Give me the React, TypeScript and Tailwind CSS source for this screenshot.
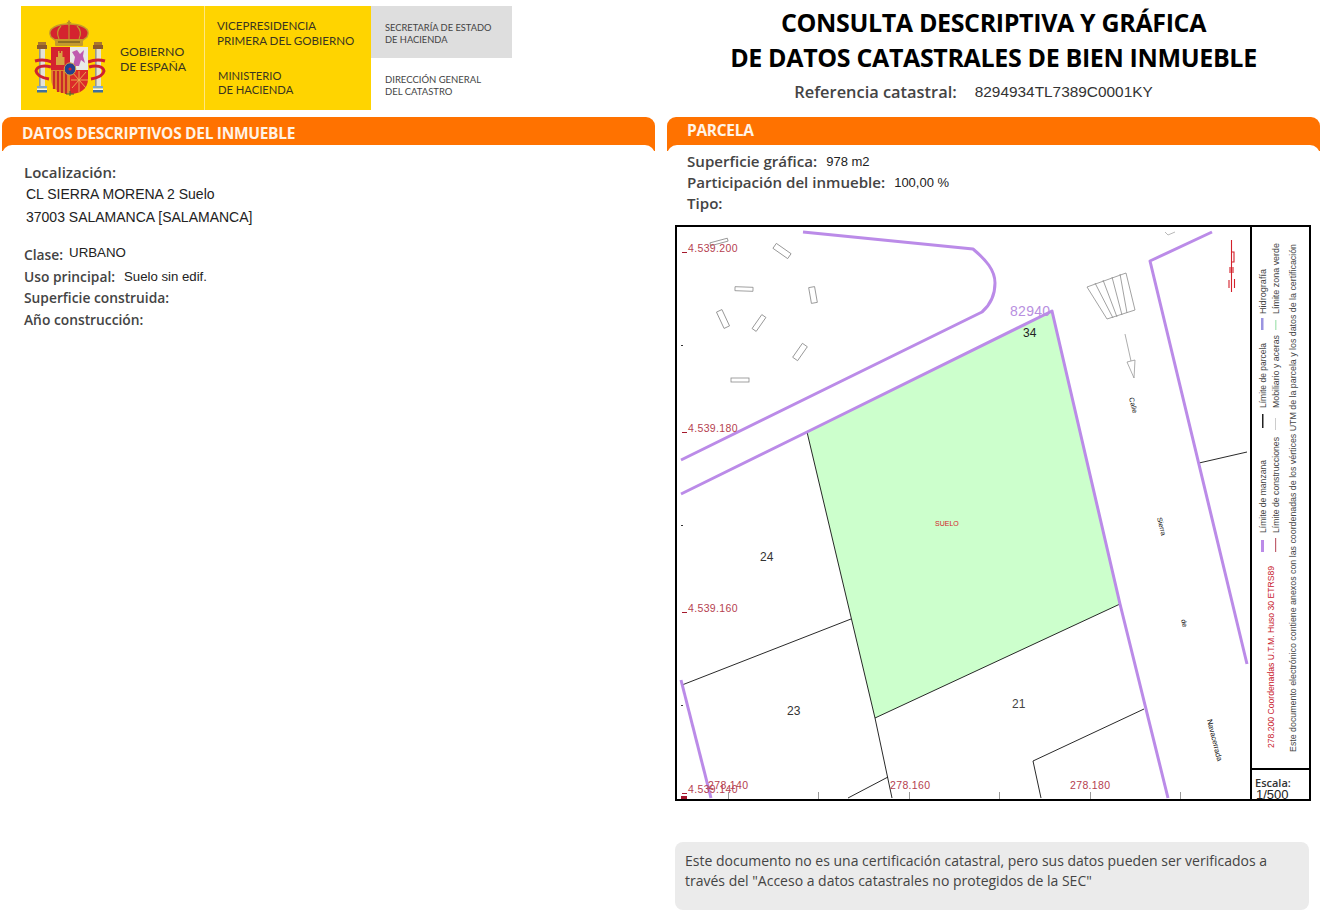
const furniture = [
  { x: 719, y: 242, w: 18, h: 3, a: -15 },
  { x: 782, y: 251, w: 18, h: 6, a: 35 },
  { x: 744, y: 289, w: 18, h: 4, a: 2 },
  { x: 813, y: 295, w: 16, h: 6, a: 80 },
  { x: 723, y: 319, w: 18, h: 6, a: 65 },
  { x: 759, y: 323, w: 17, h: 5, a: -55 },
  { x: 800, y: 352, w: 17, h: 6, a: -55 },
  { x: 740, y: 380, w: 18, h: 4, a: 0 },
];

const purpleLines = [
  'M803 232 L973 249 C986 260 995 270 995 283 C995 295 990 305 982 312 L681 460',
  'M681 494 L807 432 L1052 311 L1120 604 L1168 798',
  'M1212 232 L1150 261 L1247 664',
  'M681 680 L711 798',
];

const blackLines = [
  'M807 432 L875 718 L892 798',
  'M682 685 L851 619',
  'M875 718 L1120 604',
  'M848 798 L888 777',
  'M1041 798 L1033 761 L1144 709',
  'M1199 463 L1247 452',
];

const gridY = [
  { label: '4.539.200', y: 252 },
  { label: '4.539.180', y: 432 },
  { label: '4.539.160', y: 612 },
  { label: '4.539.140', y: 793 },
];

const gridX = [
  { label: '278.140', x: 708 },
  { label: '278.160', x: 890 },
  { label: '278.180', x: 1070 },
];

const streetNames = [
  { label: 'Calle', x: 1129, y: 398, size: 7 },
  { label: 'Sierra', x: 1157, y: 518, size: 7 },
  { label: 'de', x: 1181, y: 620, size: 7 },
  { label: 'Navacerrada', x: 1207, y: 720, size: 7.5 },
];

function CoatOfArms() {
  return (
    <svg viewBox="30 15 80 85" className="w-[80px] h-[85px] shrink-0">
      {/* pillars */}
      {[37, 93].map(x => (
        <g key={x}>
          <rect x={x + 1} y={41} width={8} height={3} fill="#a8752f" />
          <rect x={x} y={44} width={10} height={4} fill="#8d5a2b" />
          <rect x={x + 2} y={48} width={6} height={37} fill="#e3e1d6" />
          <rect x={x + 2} y={48} width={1.6} height={37} fill="#97978c" />
          <rect x={x} y={85} width={10} height={2.5} fill="#7fa8c9" />
          <rect x={x} y={87.5} width={10} height={1.5} fill="#f4f4ee" />
          <rect x={x} y={89} width={10} height={2.5} fill="#3f6f9d" />
        </g>
      ))}
      {/* ribbons */}
      <path d="M35 60 C42 58 47 59 52 61 M51 66 C44 64 37 65 36 70 C37 75 43 77 49 78" fill="none" stroke="#cf2030" strokeWidth="3" />
      <path d="M105 60 C98 58 93 59 88 61 M89 66 C96 64 103 65 104 70 C103 75 97 77 91 78" fill="none" stroke="#cf2030" strokeWidth="3" />
      {/* crown */}
      <path d="M51 36 C46 27 58 23 69 23 C80 23 92 27 87 36 L83 39 H55 Z" fill="#d4232f" stroke="#c49a2c" strokeWidth="1.4" />
      <path d="M69 24 V38 M61 25 C57 29 57 34 59 38 M77 25 C81 29 81 34 79 38" fill="none" stroke="#c49a2c" strokeWidth="1.1" />
      <rect x="55" y="38" width="28" height="7" rx="1" fill="#c49a2c" />
      <rect x="58" y="40" width="22" height="2" fill="#8f6f22" />
      <rect x="68" y="19.5" width="2" height="5" fill="#b98f2a" />
      <rect x="66.8" y="21" width="4.4" height="1.4" fill="#b98f2a" />
      {/* shield */}
      <path d="M51 46 H70 V69 H51 Z" fill="#d4232f" />
      <path d="M70 46 H88 V69 H70 Z" fill="#e9e9e6" />
      <path d="M51 69 H70 V93 C60 93 51 88 51 78 Z" fill="#e08a2c" />
      <path d="M54 70 V88 M58 70 V91 M62 70 V92 M66 70 V93" stroke="#c92a2a" strokeWidth="2.2" />
      <path d="M70 69 H88 V78 C88 88 80 93 70 93 Z" fill="#dc2a2a" />
      <path d="M72 71 L86 87 M86 71 L72 87 M79 70 V91 M71 79 H88" stroke="#e9a84c" strokeWidth="1" />
      {/* castle and lion */}
      <path d="M56 64 V56 H58 V50 H59.5 V52 H61 V50 H62.5 V56 H64.5 V64 Z" fill="#d9a441" />
      <path d="M73 65 L75 56 L72 51 L77 49 L80 53 L84 49 L83 55 L85 62 L81 59 L79 65 Z" fill="#c05aae" />
      {/* centre */}
      <ellipse cx="70" cy="68" rx="5.8" ry="6.2" fill="#25408f" stroke="#d9a441" strokeWidth="1" />
      <circle cx="70" cy="68" r="1.6" fill="#d4232f" />
      <path d="M70 90 V95 M66 93 H74" stroke="#3e6b3a" strokeWidth="1" />
    </svg>
  );
}

function Logo() {
  return (
    <div className="flex w-[491px] h-[104px] ml-[21px] mt-[6px] text-[#3a3520] font-['Lato',sans-serif] shrink-0">
      <div className="w-[183px] h-full bg-[#ffd400] flex items-center pl-[9px]">
        <CoatOfArms />
        <div className="ml-[10px] pt-[2px] text-[12.3px] leading-[15px] whitespace-nowrap">
          <div>GOBIERNO</div>
          <div>DE ESPAÑA</div>
        </div>
      </div>
      <div className="w-[167px] h-full bg-[#ffd400] border-l border-[#ffe680] pl-[12px] pt-[12px] pb-[13px] flex flex-col justify-between leading-[15px] whitespace-nowrap">
        <div className="text-[11.6px]">
          <div>VICEPRESIDENCIA</div>
          <div>PRIMERA DEL GOBIERNO</div>
        </div>
        <div className="text-[11.2px] leading-[14px] pl-[1px]">
          <div>MINISTERIO</div>
          <div>DE HACIENDA</div>
        </div>
      </div>
      <div className="w-[141px] h-full flex flex-col leading-[11.5px] whitespace-nowrap text-[#444]">
        <div className="h-[52px] bg-[#dedede] pl-[14px] pt-[16px] text-[9.3px]">
          <div>SECRETARÍA DE ESTADO</div>
          <div>DE HACIENDA</div>
        </div>
        <div className="pl-[14px] pt-[16px] text-[9.5px]">
          <div>DIRECCIÓN GENERAL</div>
          <div>DEL CATASTRO</div>
        </div>
      </div>
    </div>
  );
}

function SectionBar({ title, textClass }: { title: string; textClass: string }) {
  return (
    <div className={`h-[34px] bg-[#ff7200] rounded-t-[9px] px-[20px] font-['Open_Sans',sans-serif] font-bold text-[15.5px] tracking-[-0.3px] text-[#fff3e6] ${textClass}`}>
      {title}
    </div>
  );
}

function MapDrawing() {
  return (
    <svg viewBox="677 227 573 572" className="w-[573px] h-[572px] shrink-0 font-normal">
      <polygon points="807,432 1052,311 1120,604 875,718" fill="#ccffcc" />

      {furniture.map((f, i) => (
        <rect
          key={i}
          x={f.x - f.w / 2}
          y={f.y - f.h / 2}
          width={f.w}
          height={f.h}
          fill="none"
          stroke="#8a8a8a"
          strokeWidth="0.8"
          transform={`rotate(${f.a} ${f.x} ${f.y})`}
        />
      ))}

      {/* parking bays */}
      <path
        d="M1087 287 L1126 273 L1135 310 L1107 319 Z M1095 283 L1113 318 M1103 280 L1117 317 M1112 277 L1122 315 M1120 274 L1127 313"
        fill="none"
        stroke="#8a8a8a"
        strokeWidth="0.8"
      />

      {/* street arrow and small marks */}
      <path d="M1125 334 L1131 361 L1127 362 L1134 378 L1135 360 L1131 361" fill="none" stroke="#8a8a8a" strokeWidth="0.7" />
      <path d="M1165 232 L1168 235 L1175 232" fill="none" stroke="#999" strokeWidth="0.7" />
      <path d="M1231.5 240 V292 M1232 252 H1234 V262 H1232 M1230 267 V273 M1233 267 V273 M1229 280 V288 M1234.5 279 V288" fill="none" stroke="#d3202a" strokeWidth="1.1" />

      {blackLines.map(d => (
        <path key={d} d={d} fill="none" stroke="#111" strokeWidth="0.9" />
      ))}
      {purpleLines.map(d => (
        <path key={d} d={d} fill="none" stroke="#bb8be8" strokeWidth="3" strokeLinejoin="round" />
      ))}

      <g fontFamily="'Liberation Sans', sans-serif">
        {gridY.map(g => (
          <g key={g.label}>
            <rect x="682" y={g.y} width="5" height="1" fill="#a5182c" />
            <text x="688" y={g.y} fontSize="10.5" letterSpacing="0.35" fill="#b5414f">{g.label}</text>
          </g>
        ))}
        {gridX.map(g => (
          <text key={g.label} x={g.x} y="789" fontSize="10.5" letterSpacing="0.35" fill="#b5414f">{g.label}</text>
        ))}
        {[728, 818, 909, 999, 1090, 1180].map(x => (
          <rect key={x} x={x} y="792" width="1" height="7" fill="#999" />
        ))}
        {[345, 525, 705].map(y => (
          <rect key={y} x="681" y={y} width="2" height="1" fill="#333" />
        ))}
        <rect x="681" y="796" width="6" height="3" fill="#a5182c" />

        <text x="1010" y="316" fontSize="14" letterSpacing="0.3" fill="#b88fe0">82940</text>
        <text x="1023" y="337" fontSize="12" fill="#222">34</text>
        <text x="760" y="561" fontSize="12" fill="#333">24</text>
        <text x="787" y="715" fontSize="12" fill="#333">23</text>
        <text x="1012" y="708" fontSize="12" fill="#444">21</text>
        <text x="935" y="526" fontSize="7" fill="#d3202a">SUELO</text>
        {streetNames.map(s => (
          <text key={s.label} x={s.x} y={s.y} fontSize={s.size} fill="#111" transform={`rotate(76 ${s.x} ${s.y})`}>{s.label}</text>
        ))}
      </g>
    </svg>
  );
}

function LegendText({ x, y, len, fill, children }: { x: number; y: number; len: number; fill: string; children: string }) {
  return (
    <text
      x={0}
      y={0}
      transform={`translate(${x} ${y}) rotate(-90)`}
      fontSize="9.5"
      fill={fill}
      textLength={len}
      lengthAdjust="spacingAndGlyphs"
    >
      {children}
    </text>
  );
}

function Legend() {
  return (
    <div className="w-[59px] h-full flex flex-col border-l-2 border-black shrink-0 font-normal">
      <svg viewBox="1252 227 57 541" className="w-[57px] h-[541px] shrink-0">
        <g fontFamily="'Liberation Sans', sans-serif">
          <LegendText x={1266} y={533} len={73} fill="#444">Límite de manzana</LegendText>
          <LegendText x={1266} y={408} len={65} fill="#444">Límite de parcela</LegendText>
          <LegendText x={1266} y={314} len={45} fill="#444">Hidrografía</LegendText>
          <LegendText x={1279} y={533} len={96} fill="#444">Límite de construcciones</LegendText>
          <LegendText x={1279} y={408} len={73} fill="#444">Mobiliario y aceras</LegendText>
          <LegendText x={1279} y={314} len={71} fill="#444">Límite zona verde</LegendText>
          <LegendText x={1274} y={748} len={182} fill="#c8202c">278.200 Coordenadas U.T.M. Huso 30 ETRS89</LegendText>
          <LegendText x={1296} y={752} len={508} fill="#444">Este documento electrónico contiene anexos con las coordenadas de los vértices UTM de la parcela y los datos de la certificación</LegendText>
        </g>
        <rect x="1261" y="540" width="3" height="12" fill="#bb8be8" />
        <rect x="1262" y="414" width="1.5" height="14" fill="#222" />
        <rect x="1261" y="318" width="2.5" height="12" fill="#9a94e0" />
        <rect x="1275" y="538" width="1.2" height="14" fill="#c0616e" />
        <rect x="1275" y="418" width="1" height="12" fill="#ccc" />
        <rect x="1275" y="320" width="1.5" height="10" fill="#b5e8c0" />
      </svg>
      <div className="flex-1 border-t-2 border-black pl-[3px] overflow-hidden leading-none">
        <div className="font-['Open_Sans',sans-serif] font-semibold text-[11px] leading-[13px] mt-[6px] text-[#333]">Escala:</div>
        <div className="font-['Liberation_Sans',sans-serif] text-[13px] leading-[13px] -mt-[1px] pl-[1px] text-[#222]">1/500</div>
      </div>
    </div>
  );
}

export default function App() {
  return (
    <div className="w-[1325px] h-[912px] bg-white overflow-hidden font-['Open_Sans',sans-serif] text-[#444]">
      <div className="flex h-[117px]">
        <div className="w-[667px] shrink-0">
          <Logo />
        </div>
        <div className="w-[653px] flex flex-col items-center pt-[5px]">
          <h1 className="font-bold text-[25px] leading-[35px] tracking-[-0.35px] text-black text-center whitespace-nowrap">
            CONSULTA DESCRIPTIVA Y GRÁFICA
            <br />
            DE DATOS CATASTRALES DE BIEN INMUEBLE
          </h1>
          <div className="flex items-center mt-[5px] mr-[40px] leading-[24px]">
            <span className="font-semibold text-[16.4px]">Referencia catastral:</span>
            <span className="ml-[18px] font-['Liberation_Sans',sans-serif] text-[15.4px] text-[#333]">8294934TL7389C0001KY</span>
          </div>
        </div>
      </div>

      <div className="flex">
        {/* left column */}
        <section className="w-[653px] ml-[2px] shrink-0">
          <SectionBar title="DATOS DESCRIPTIVOS DEL INMUEBLE" textClass="pt-[5px]" />
          <div className="-mt-[6px] relative bg-white rounded-t-[10px] px-[22px] pt-[17px] text-[13.8px] font-semibold">
            <div className="leading-[20px] text-[15px]">Localización:</div>
            <div className="font-['Liberation_Sans',sans-serif] font-normal text-[14px] leading-[23px] pl-[2px] pt-[1px] text-[#222]">
              <div>CL SIERRA MORENA 2 Suelo</div>
              <div>37003 SALAMANCA [SALAMANCA]</div>
            </div>
            <div className="flex items-start mt-[13px] leading-[22px]">
              <span className="pt-[2px]">Clase:</span>
              <span className="ml-[6px] font-['Liberation_Sans',sans-serif] font-normal text-[13.3px] text-[#222]">URBANO</span>
            </div>
            <div className="flex leading-[21px]">
              <span>Uso principal:</span>
              <span className="ml-[9px] font-['Liberation_Sans',sans-serif] font-normal text-[13.2px] text-[#222]">Suelo sin edif.</span>
            </div>
            <div className="leading-[21px]">Superficie construida:</div>
            <div className="leading-[22px] mt-[1px]">Año construcción:</div>
          </div>
        </section>

        {/* right column */}
        <section className="w-[653px] ml-[12px] shrink-0">
          <SectionBar title="PARCELA" textClass="pt-[2px]" />
          <div className="-mt-[6px] relative bg-white rounded-t-[10px] pt-[6px] text-[15.1px] font-semibold">
            <div className="pl-[20px]">
              <div className="flex items-center leading-[21px]">
                <span>Superficie gráfica:</span>
                <span className="ml-[9px] font-['Liberation_Sans',sans-serif] font-normal text-[13px] text-[#222]">978 m2</span>
              </div>
              <div className="flex items-center leading-[21px]">
                <span>Participación del inmueble:</span>
                <span className="ml-[9px] font-['Liberation_Sans',sans-serif] font-normal text-[13px] text-[#222]">100,00 %</span>
              </div>
              <div className="leading-[21px]">Tipo:</div>
            </div>

            <div className="flex w-[636px] h-[576px] ml-[8px] mt-[11px] border-2 border-black bg-white overflow-hidden">
              <MapDrawing />
              <Legend />
            </div>

            <div className="w-[634px] h-[68px] ml-[8px] mt-[41px] bg-[#ebebeb] rounded-lg px-[10px] pt-[9px] text-[14px] font-normal leading-[20px]">
              Este documento no es una certificación catastral, pero sus datos pueden ser verificados a través del "Acceso a datos catastrales no protegidos de la SEC"
            </div>
          </div>
        </section>
      </div>
    </div>
  );
}
